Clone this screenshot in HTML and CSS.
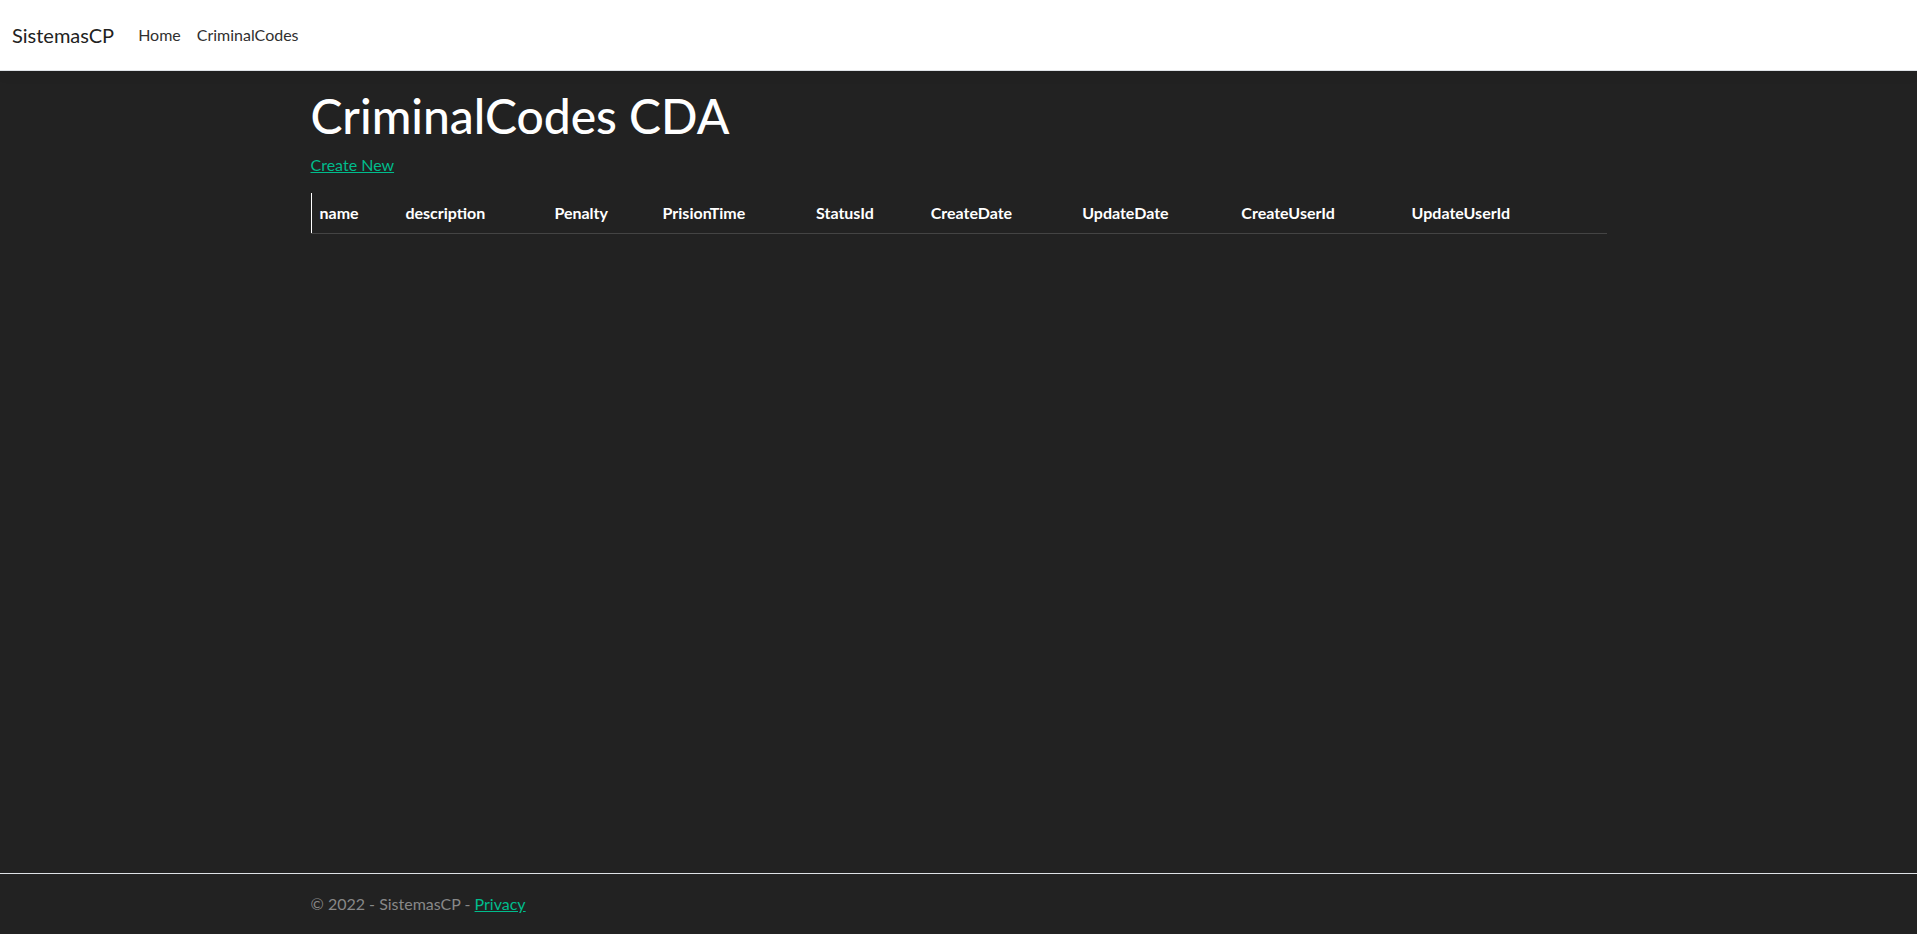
FILE: index.html
```html
<!DOCTYPE html>
<html lang="en">
<head>
<meta charset="utf-8">
<title>Index - SistemasCP</title>
<link rel="stylesheet" href="styles.css">
</head>
<body>
<header>
  <nav class="navbar">
    <div class="navbar-inner">
      <a class="brand" href="#">SistemasCP</a>
      <ul class="nav">
        <li><a class="nav-link" href="#">Home</a></li>
        <li><a class="nav-link" href="#">CriminalCodes</a></li>
      </ul>
    </div>
  </nav>
</header>
<div class="container page">
  <main class="main">
    <h1 class="title">CriminalCodes CDA</h1>
    <p class="create"><a href="#">Create New</a></p>
    <table class="table">
      <thead>
        <tr>
          <th class="first">name</th>
          <th>description</th>
          <th>Penalty</th>
          <th>PrisionTime</th>
          <th>StatusId</th>
          <th>CreateDate</th>
          <th>UpdateDate</th>
          <th>CreateUserId</th>
          <th>UpdateUserId</th>
          <th></th>
        </tr>
      </thead>
      <tbody></tbody>
    </table>
  </main>
</div>
<footer class="footer">
  <div class="container footer-inner">
    &copy; 2022 - SistemasCP - <a href="#">Privacy</a>
  </div>
</footer>
</body>
</html>
```
FILE: styles.css
```css
* { box-sizing: border-box; }
html, body { margin: 0; padding: 0; }
body {
  font-family: Lato, "Noto Sans", "Liberation Sans", sans-serif;
  font-size: 16px;
  line-height: 1.5;
  color: #fff;
  background: #222;
  min-height: 100vh;
  display: flex;
  flex-direction: column;
}
a { color: #00bc8c; }

.navbar {
  background: #fff;
  border-bottom: 1px solid #dee2e6;
  box-shadow: 0 .25rem .75rem rgba(0,0,0,.05);
  padding: 15px 0;
  margin-bottom: 16px;
}
.navbar-inner {
  display: flex;
  align-items: center;
  padding: 0 12px;
}
.brand {
  font-size: 20px;
  line-height: 1.5;
  padding: 5px 0;
  margin-right: 16px;
  color: #222;
  text-decoration: none;
}
.nav {
  list-style: none;
  margin: 0;
  padding: 0;
  display: flex;
}
.nav-link {
  display: block;
  padding: 8px 8px;
  color: #303030;
  text-decoration: none;
}

.container {
  width: 100%;
  max-width: 1320px;
  margin: 0 auto;
  padding: 0 12px;
}
.main { padding-bottom: 16px; }
.title {
  margin: 0 0 8px;
  font-size: 48px;
  font-weight: 500;
  line-height: 1.2;
}
.create { margin: 0 0 16px; }

.table {
  width: 100%;
  border-collapse: collapse;
  margin-bottom: 16px;
  color: #fff;
}
.table th {
  text-align: left;
  font-weight: 700;
  padding: 8px;
  border-bottom: 1px solid #444;
  vertical-align: bottom;
}
.table th.first { border-left: 1px solid #fff; }

.footer {
  margin-top: auto;
  border-top: 1px solid #dee2e6;
  line-height: 60px;
  white-space: nowrap;
  color: #888;
}
```
